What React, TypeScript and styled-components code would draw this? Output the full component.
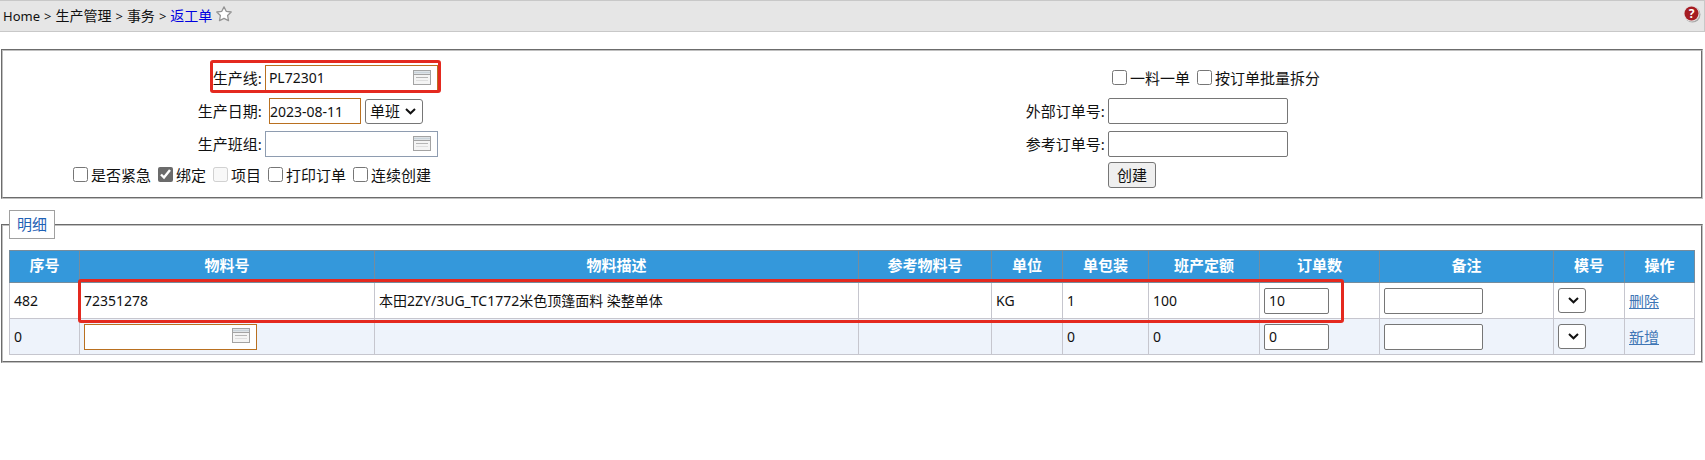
import React from "react";
import styled, { createGlobalStyle } from "styled-components";

const latin = `"Noto Sans", "Open Sans", "Noto Sans CJK SC", sans-serif`;

const GlobalStyle = createGlobalStyle`
  *, *::before, *::after { box-sizing: border-box; }
  body { margin: 0; background: #fff; color: #111; font: 15px/20px ${latin}; }
  input, select, button { font: 14px/18px ${latin}; color: #111; margin: 0; }
`;

const Bar = styled.header`
  display: flex;
  align-items: center;
  height: 32px;
  padding: 0 3px;
  background: #e6e6e6;
  border: 1px solid #c8c8c8;
  border-left: 0;
`;

const Crumbs = styled.nav`
  display: flex;
  flex: 1;
  align-items: center;
  gap: 4px;
  font-size: 14px;
  line-height: 20px;
`;

const CrumbLatin = styled.span`
  font-size: 13px;
`;

const CrumbLink = styled.a`
  color: #0000e0;
  text-decoration: none;
`;

const IconButton = styled.button`
  display: flex;
  padding: 0 0 4px;
  border: 0;
  background: none;
`;

const Panel = styled.fieldset`
  min-width: 0;
  margin: 17px 2px 0 1px;
  padding: 14px 6px 9px;
  border: 2px groove #c0c0c0;
`;

const DetailPanel = styled(Panel)`
  margin-top: 11px;
  padding: 11px 6px 6px;
`;

const Legend = styled.legend`
  padding: 4px 7px;
  border: 1px solid #a0a0a0;
  color: #1f62b5;
  font-size: 15px;
  line-height: 19px;
`;

const FormGrid = styled.div`
  display: grid;
  grid-template-columns: 15% 35% 15% 35%;
  grid-auto-rows: 26px;
  row-gap: 7px;
  align-items: center;
`;

const ActionGrid = styled(FormGrid)`
  margin-top: 5px;
`;

const FieldLabel = styled.label<{ $column?: number }>`
  grid-column: ${(p) => p.$column ?? "auto"};
  text-align: right;
`;

const Field = styled.div<{ $column?: number; $inset?: number }>`
  position: relative;
  grid-column: ${(p) => p.$column ?? "auto"};
  display: flex;
  align-items: center;
  gap: 4px;
  padding-left: ${(p) => p.$inset ?? 3}px;
`;

const Checks = styled.div<{ $span?: boolean; $inset: number }>`
  grid-column: ${(p) => (p.$span ? "1 / 3" : "4")};
  display: flex;
  gap: 7px;
  padding-left: ${(p) => p.$inset}px;
`;

const CheckLabel = styled.label`
  display: flex;
  align-items: center;
  gap: 3px;
`;

const CheckBox = styled.input`
  width: 15px;
  height: 15px;
  margin: 0 0 2px;
  accent-color: #6b6b6b;
`;

const TextInput = styled.input<{ $width: number }>`
  width: ${(p) => p.$width}px;
  height: 26px;
  padding: 0 4px;
  border: 1px solid #767676;
  border-radius: 2px;
  background: #fff;
`;

const DateInput = styled(TextInput)`
  padding: 0;
  border-color: #b97020;
  border-radius: 0;
`;

const Picker = styled.div<{ $required?: boolean }>`
  display: flex;
  align-items: center;
  width: 173px;
  height: 26px;
  padding-right: 6px;
  border: 1px solid ${(p) => (p.$required ? "#b97020" : "#8e9cb0")};
  background: #fff;
`;

const PickerInput = styled.input`
  flex: 1;
  min-width: 0;
  padding: 0 0 0 3px;
  border: 0;
  outline: 0;
  background: none;
`;

const PickerButton = styled(IconButton)`
  padding-bottom: 2px;
`;

const SelectBox = styled.span`
  position: relative;
  display: inline-flex;
`;

const Select = styled.select<{ $width: number }>`
  appearance: none;
  width: ${(p) => p.$width}px;
  height: 25px;
  padding: 0 0 0 4px;
  border: 1px solid #767676;
  border-radius: 3px;
  background: #fff;
  font-size: 15px;
`;

const Chevron = styled.svg`
  position: absolute;
  top: 9px;
  right: 7px;
  pointer-events: none;
`;

const CreateButton = styled.button`
  height: 26px;
  padding: 0 8px;
  border: 1px solid #767676;
  border-radius: 3px;
  background: #efefef;
  font-size: 15px;
`;

const Marker = styled.div`
  position: absolute;
  border: 3px solid #e4291f;
  border-radius: 3px;
  pointer-events: none;
`;

const LineMarker = styled(Marker)`
  top: -5px;
  left: -52px;
  width: 231px;
  height: 33px;
`;

const RowMarker = styled(Marker)`
  top: 29px;
  left: 69px;
  right: 351px;
  height: 44px;
`;

const TableWrap = styled.div`
  position: relative;
`;

const Table = styled.table`
  width: 100%;
  border-collapse: collapse;
  table-layout: fixed;
  font-size: 14px;
`;

const HeadCell = styled.th<{ $width?: number }>`
  width: ${(p) => (p.$width ? `${p.$width}px` : "auto")};
  height: 32px;
  padding: 0 0 3px;
  border: 1px solid #768c9c;
  background: #3498db;
  color: #fff;
  font-size: 15px;
  font-weight: 700;
`;

const Row = styled.tr<{ $alt?: boolean }>`
  background: ${(p) => (p.$alt ? "#eef3fb" : "#fff")};
`;

const Cell = styled.td`
  height: 36px;
  padding: 0 4px;
  border: 1px solid #c6c6ce;
  white-space: nowrap;

  > * { vertical-align: middle; }
`;

const ActionLink = styled.a`
  color: #3f76b5;
  font-size: 15px;
`;

const CardIcon = () => (
  <svg width="18" height="15" viewBox="0 0 18 15" aria-hidden="true">
    <rect x="0.5" y="0.5" width="17" height="14" fill="#f4f4f4" stroke="#a3a3a3" />
    <path d="M1 2.5H17" stroke="#c9d3da" strokeWidth="2" />
    <path d="M1 4.5H17" stroke="#a3a3a3" />
    <path d="M3 7.5H15" stroke="#b5b5b5" />
    <path d="M3 10.5H15" stroke="#dedede" />
  </svg>
);

const StarIcon = () => (
  <svg width="16" height="16" viewBox="0 0 16 16" aria-hidden="true">
    <path
      d="M8 0.9L10.2 5.3L15.2 6L11.6 9.5L12.5 14.6L8 12.3L3.5 14.6L4.4 9.5L0.8 6L5.8 5.3Z"
      fill="#fff"
      stroke="#949494"
      strokeWidth="1.3"
      strokeLinejoin="round"
    />
  </svg>
);

const HelpIcon = () => (
  <svg width="18" height="18" viewBox="0 0 18 18" aria-hidden="true">
    <circle cx="9.5" cy="9.5" r="8" fill="#a9a9a9" />
    <circle cx="8.5" cy="8.5" r="8" fill="#e6dede" />
    <circle cx="8.5" cy="8.5" r="7" fill="#a51c22" />
    <text x="8.5" y="13" textAnchor="middle" fontFamily="Noto Sans" fontSize="12" fontWeight="700" fill="#fff">?</text>
  </svg>
);

type PickerProps = { id?: string; label: string; value?: string; required?: boolean };

const LookupField = ({ id, label, value, required }: PickerProps) => (
  <Picker $required={required}>
    <PickerInput id={id} aria-label={label} defaultValue={value} />
    <PickerButton type="button" aria-label={`选择${label}`}>
      <CardIcon />
    </PickerButton>
  </Picker>
);

const DropDown = ({ label, width, option }: { label: string; width: number; option?: string }) => (
  <SelectBox>
    <Select $width={width} aria-label={label}>
      <option>{option}</option>
    </Select>
    <Chevron width="11" height="7" viewBox="0 0 11 7" aria-hidden="true">
      <path d="M1 1L5.5 5.3L10 1" fill="none" stroke="#111" strokeWidth="2" />
    </Chevron>
  </SelectBox>
);

type CheckProps = { label: string; checked?: boolean; disabled?: boolean };

const Check = ({ label, checked, disabled }: CheckProps) => (
  <CheckLabel>
    <CheckBox type="checkbox" defaultChecked={checked} disabled={disabled} />
    {label}
  </CheckLabel>
);

const columns: { title: string; width?: number }[] = [
  { title: "序号", width: 70 },
  { title: "物料号", width: 295 },
  { title: "物料描述" },
  { title: "参考物料号", width: 133 },
  { title: "单位", width: 71 },
  { title: "单包装", width: 86 },
  { title: "班产定额", width: 111 },
  { title: "订单数", width: 120 },
  { title: "备注", width: 174 },
  { title: "模号", width: 71 },
  { title: "操作", width: 70 },
];

const rows = [
  {
    seq: "482",
    item: "72351278",
    desc: "本田2ZY/3UG_TC1772米色顶篷面料 染整单体",
    unit: "KG",
    pack: "1",
    quota: "100",
    qty: "10",
    action: "删除",
  },
  { seq: "0", item: "", desc: "", unit: "", pack: "0", quota: "0", qty: "0", action: "新增" },
];

export default function App() {
  return (
    <>
      <GlobalStyle />
      <Bar>
        <Crumbs>
          <CrumbLatin>Home</CrumbLatin>
          <CrumbLatin>&gt;</CrumbLatin>
          <span>生产管理</span>
          <CrumbLatin>&gt;</CrumbLatin>
          <span>事务</span>
          <CrumbLatin>&gt;</CrumbLatin>
          <CrumbLink href="#">返工单</CrumbLink>
          <IconButton type="button" aria-label="收藏">
            <StarIcon />
          </IconButton>
        </Crumbs>
        <IconButton type="button" aria-label="帮助">
          <HelpIcon />
        </IconButton>
      </Bar>

      <main>
        <Panel>
          <FormGrid>
            <FieldLabel htmlFor="line">生产线:</FieldLabel>
            <Field>
              <LookupField id="line" label="生产线" value="PL72301" required />
              <LineMarker />
            </Field>
            <Checks $inset={7}>
              <Check label="一料一单" />
              <Check label="按订单批量拆分" />
            </Checks>

            <FieldLabel htmlFor="date" $column={1}>生产日期:</FieldLabel>
            <Field $inset={7}>
              <DateInput id="date" $width={92} defaultValue="2023-08-11" />
              <DropDown label="班次" width={58} option="单班" />
            </Field>
            <FieldLabel htmlFor="external">外部订单号:</FieldLabel>
            <Field>
              <TextInput id="external" $width={180} />
            </Field>

            <FieldLabel htmlFor="team">生产班组:</FieldLabel>
            <Field>
              <LookupField id="team" label="生产班组" />
            </Field>
            <FieldLabel htmlFor="reference">参考订单号:</FieldLabel>
            <Field>
              <TextInput id="reference" $width={180} />
            </Field>
          </FormGrid>
          <ActionGrid>
            <Checks $span $inset={64}>
              <Check label="是否紧急" />
              <Check label="绑定" checked />
              <Check label="项目" disabled />
              <Check label="打印订单" />
              <Check label="连续创建" />
            </Checks>
            <Field $column={4}>
              <CreateButton type="button">创建</CreateButton>
            </Field>
          </ActionGrid>
        </Panel>

        <DetailPanel>
          <Legend>明细</Legend>
          <TableWrap>
            <Table>
              <thead>
                <tr>
                  {columns.map((c) => (
                    <HeadCell key={c.title} $width={c.width} scope="col">
                      {c.title}
                    </HeadCell>
                  ))}
                </tr>
              </thead>
              <tbody>
                {rows.map((r, i) => (
                  <Row key={r.seq} $alt={i % 2 === 1}>
                    <Cell>{r.seq}</Cell>
                    <Cell>{r.item || <LookupField label="物料号" required />}</Cell>
                    <Cell>{r.desc}</Cell>
                    <Cell />
                    <Cell>{r.unit}</Cell>
                    <Cell>{r.pack}</Cell>
                    <Cell>{r.quota}</Cell>
                    <Cell>
                      <TextInput $width={65} aria-label="订单数" defaultValue={r.qty} />
                    </Cell>
                    <Cell>
                      <TextInput $width={99} aria-label="备注" />
                    </Cell>
                    <Cell>
                      <DropDown label="模号" width={28} />
                    </Cell>
                    <Cell>
                      <ActionLink href="#">{r.action}</ActionLink>
                    </Cell>
                  </Row>
                ))}
              </tbody>
            </Table>
            <RowMarker />
          </TableWrap>
        </DetailPanel>
      </main>
    </>
  );
}
